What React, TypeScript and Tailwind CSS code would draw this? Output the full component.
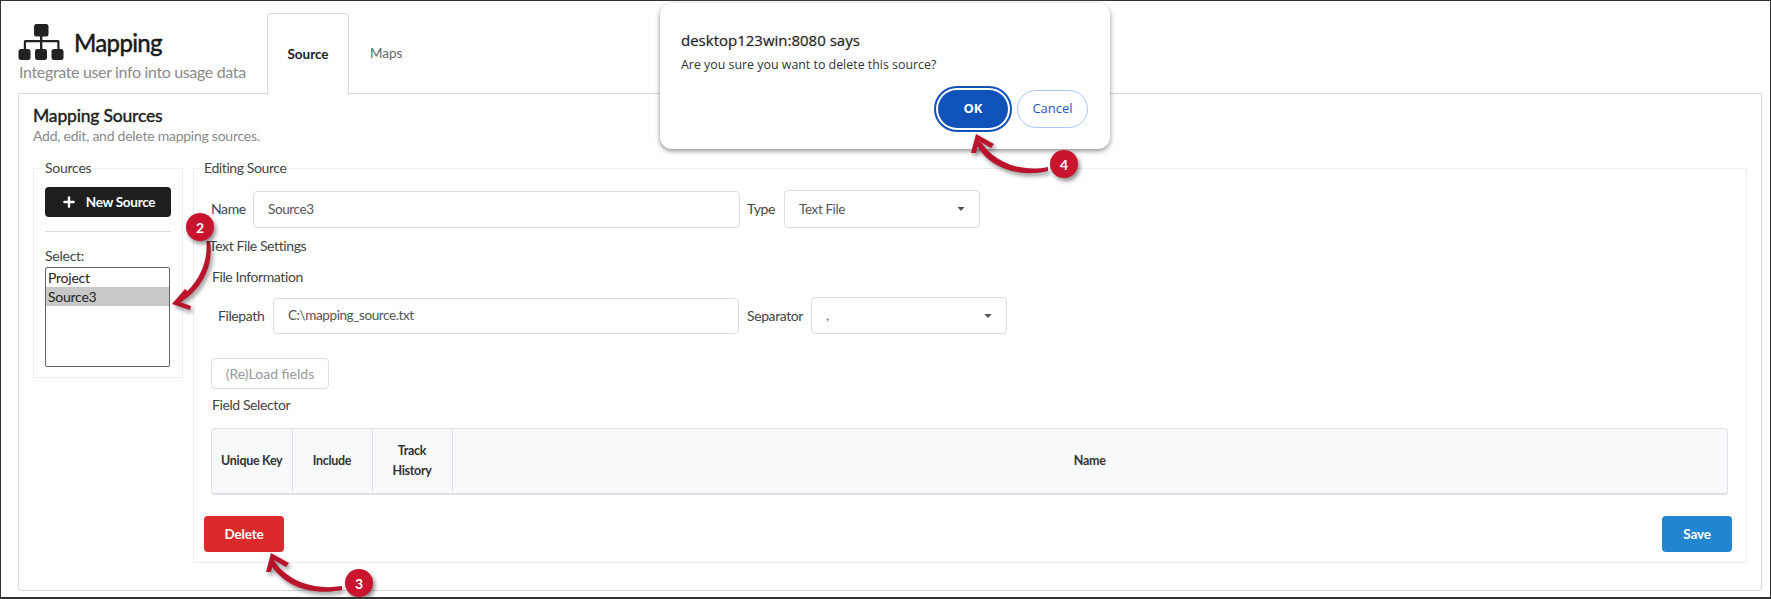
import { Plus } from 'lucide-react';

const SITE_FONT = "font-['Lato','Noto_Sans',sans-serif]";

function MappingIcon() {
  return (
    <svg width="46" height="37" viewBox="0 0 46 37" className="-ml-px shrink-0 text-[#222]" fill="currentColor">
      <rect x="16" y="0" width="14.5" height="12.5" rx="2.5" />
      <rect x="0.5" y="25" width="12" height="11" rx="2.5" />
      <rect x="17" y="25" width="12" height="11" rx="2.5" />
      <rect x="33.5" y="25" width="12" height="11" rx="2.5" />
      <path d="M22 12h2.4v4H40a1.5 1.5 0 0 1 1.5 1.5V25h-2.2v-6.7H24.4V25h-2.4v-6.7H8V25H5.800v-7.500A1.500 1.500 0 0 1 7.300 16H22z" />
    </svg>
  );
}

function Caret() {
  return (
    <svg width="8" height="4" viewBox="0 0 9 5" className="shrink-0 text-[#555]" fill="currentColor">
      <path d="M0 0h9L4.5 5z" />
    </svg>
  );
}

function Badge({ label, className }: { label: string; className: string }) {
  return (
    <div
      className={`absolute flex h-[28px] w-[28px] items-center justify-center rounded-full bg-[#c8142f] text-[14px] font-bold text-white shadow-[2px_3px_4px_rgba(0,0,0,0.45)] ${className}`}
    >
      {label}
    </div>
  );
}

function Arrows() {
  const shaft = 'fill-[#b9142c]';
  return (
    <svg width="1771" height="599" viewBox="0 0 1771 599" className="pointer-events-none absolute left-0 top-0 drop-shadow-[2px_3px_2px_rgba(0,0,0,0.4)]">
      {/* arrow 2: badge to selected row */}
      <path className={shaft} d="M205.500 240 C207 262 198 284 173 301 L175 304 C201 290 213 265 209 240 Z" />
      <path className={shaft} d="M171 303 L184 288 L187.500 291 L179 301 L190 305 L189 309 Z" />
      {/* arrow 3: badge to delete */}
      <path className={shaft} d="M341 585 C310 590 284 578 272 558 L268 561 C282 586 312 595 341 589 Z" />
      <path className={shaft} d="M270 552 L265 571 L270 571 L273 559 L285 566 L288 562 Z" />
      {/* arrow 4: badge to OK */}
      <path className={shaft} d="M1047 166 C1018 172 992 160 979 140 L975 143 C988 167 1018 177 1047 170 Z" />
      <path className={shaft} d="M975 133 L970 152 L975 152 L978 140 L990 147 L993 143 Z" />
    </svg>
  );
}

function ConfirmDialog() {
  return (
    <div className="absolute left-[659px] top-[2px] h-[146px] w-[450px] rounded-[12px] bg-white px-[21px] pt-[27px] font-['Open_Sans',sans-serif] shadow-[0_2px_5px_rgba(0,0,0,0.45)]">
      <div className="text-[15px] leading-[20px] text-[#222] [text-shadow:0_0_2px_#aaa]">desktop123win:8080 says</div>
      <div className="mt-[5px] text-[12.4px] leading-[20px] text-[#333]">Are you sure you want to delete this source?</div>
      <div className="mr-[1px] mt-[11px] flex items-center justify-end gap-[5px]">
        <button className="flex h-[46px] w-[78px] items-center justify-center rounded-full border-2 border-[#0f52ba] bg-white">
          <span className="flex h-[38px] w-[70px] items-center justify-center rounded-full bg-[#0f52ba] text-[13px] font-bold text-white">OK</span>
        </button>
        <button className="h-[38px] w-[71px] rounded-full border border-[#a9c8f5] bg-white text-[13px] font-medium text-[#1a56c4]">Cancel</button>
      </div>
    </div>
  );
}

function SourcesPanel() {
  return (
    <fieldset className="w-[150px] shrink-0 border border-[#eeeeee] px-[11px] pb-[10px]">
      <legend className="text-[14px] leading-[20px] tracking-[-0.25px] text-[#444]">Sources</legend>
      <button className="mt-[9px] flex h-[30px] w-[126px] items-center justify-center gap-[9px] rounded-[4px] bg-[#1e1e1e] text-[13.5px] font-bold tracking-[-0.3px] text-white">
        <Plus size={16} strokeWidth={3.5} />
        New Source
      </button>
      <hr className="mt-[14px] border-[#dddddd]" />
      <div className="mt-[14px] text-[14px] leading-[20px] tracking-[-0.25px] text-[#444]">Select:</div>
      <div className="mt-px h-[100px] w-[125px] rounded-[2px] border border-[#666666] text-[14px] leading-[19px] tracking-[-0.25px] text-[#222]">
        <div className="px-[2px]">Project</div>
        <div className="bg-[#c8c8c8] px-[2px]">Source3</div>
      </div>
    </fieldset>
  );
}

function FieldSelector() {
  return (
    <div className="ml-[17px] mr-[18px] mt-[13px] h-[67px] overflow-hidden rounded-[4px] border border-b-2 border-[#dee2e6] bg-[#f8f9fa]">
      <table className="h-full w-full table-fixed text-center text-[12.5px] font-bold leading-[20px] tracking-[-0.3px] text-[#333]">
        <thead>
          <tr>
            <th className="w-[80px] border-r border-[#dee2e6]">Unique Key</th>
            <th className="w-[80px] border-r border-[#dee2e6]">Include</th>
            <th className="w-[80px] border-r border-[#dee2e6]">
              Track
              <br />
              History
            </th>
            <th>Name</th>
          </tr>
        </thead>
      </table>
    </div>
  );
}

function EditingPanel() {
  const input = 'flex items-center rounded-[4px] border border-[#dddddd] pl-[14px] text-[13.5px] tracking-[-0.4px] text-[#555]';
  const label = 'text-[14px] leading-[20px] tracking-[-0.4px] text-[#444]';
  return (
    <fieldset className="w-[1554px] shrink-0 border border-[#eeeeee] pb-[10px]">
      <legend className={`ml-[10px] ${label}`}>Editing Source</legend>

      <div className="mt-[12px] flex items-center pl-[17px]">
        <span className={`w-[42px] ${label}`}>Name</span>
        <div className={`h-[37px] w-[487px] ${input}`}>Source3</div>
        <span className={`ml-[7px] w-[37px] ${label}`}>Type</span>
        <div className={`h-[38px] w-[196px] justify-between pr-[14px] ${input}`}>
          Text File
          <Caret />
        </div>
      </div>

      <div className={`ml-[15px] mt-[8px] ${label}`}>Text File Settings</div>
      <div className={`ml-[18px] mt-[11px] ${label}`}>File Information</div>

      <div className="mt-[10px] flex items-center pl-[24px]">
        <span className={`w-[55px] ${label}`}>Filepath</span>
        <div className={`h-[36px] w-[466px] ${input}`}>C:\mapping_source.txt</div>
        <span className={`ml-[8px] w-[64px] ${label}`}>Separator</span>
        <div className={`h-[37px] w-[196px] justify-between pr-[14px] ${input}`}>
          ,
          <Caret />
        </div>
      </div>

      <button className="ml-[17px] mt-[24px] block h-[31px] w-[118px] rounded-[4px] border border-[#dddddd] bg-white text-[14px] text-[#999999]">
        (Re)Load fields
      </button>
      <div className={`ml-[18px] mt-[6px] ${label}`}>Field Selector</div>

      <FieldSelector />

      <div className="mt-[21px] flex justify-between pl-[10px] pr-[14px]">
        <button className="h-[36px] w-[80px] rounded-[4px] bg-[#dc2a2a] text-[13.5px] font-bold tracking-[-0.2px] text-white">Delete</button>
        <button className="h-[36px] w-[70px] rounded-[4px] bg-[#2185d0] text-[13.5px] font-bold tracking-[-0.2px] text-white">Save</button>
      </div>
    </fieldset>
  );
}

export default function App() {
  return (
    <div className={`relative h-[599px] w-[1771px] overflow-hidden border border-b-2 border-[#333333] bg-white ${SITE_FONT}`}>
      <header className="flex h-[92px] pl-[18px]">
        <div className="w-[248px] pt-[23px]">
          <div className="flex items-center gap-[10px]">
            <MappingIcon />
            <h1 className="text-[24px] font-medium leading-[37px] tracking-[-0.7px] text-[#1a1a1a] [-webkit-text-stroke:0.3px_#1a1a1a]">Mapping</h1>
          </div>
          <p className="mt-px whitespace-nowrap text-[16px] leading-[20px] tracking-[-0.35px] text-[#8a8a8a]">Integrate user info into usage data</p>
        </div>
        <div className="relative z-10 mt-[12px] flex h-[81px] w-[82px] items-center justify-center rounded-t-[4px] border border-b-0 border-[#d6d6d6] bg-white text-[13.5px] font-bold text-[#222]">
          Source
        </div>
        <div className="flex h-[81px] items-center pl-[21px] pt-[24px] text-[13.5px] text-[#666]">Maps</div>
      </header>

      <main className="ml-[17px] h-[498px] w-[1744px] rounded-b-[4px] border border-[#d6d6d6] px-[14px]">
        <h2 className="mt-[11px] text-[17.5px] font-medium leading-[22px] tracking-[-0.2px] text-[#222] [-webkit-text-stroke:0.3px_#222]">Mapping Sources</h2>
        <p className="text-[14px] leading-[18px] tracking-[-0.25px] text-[#8a8a8a]">Add, edit, and delete mapping sources.</p>
        <div className="mt-[13px] flex items-start gap-[10px]">
          <SourcesPanel />
          <EditingPanel />
        </div>
      </main>

      <ConfirmDialog />
      <Arrows />
      <Badge label="2" className="left-[185px] top-[212px]" />
      <Badge label="3" className="left-[344px] top-[568px]" />
      <Badge label="4" className="left-[1049px] top-[149px]" />
    </div>
  );
}
